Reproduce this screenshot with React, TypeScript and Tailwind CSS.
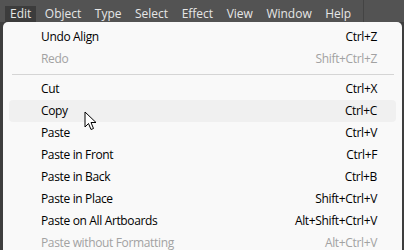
import type { FC } from 'react';

interface Item {
    label: string;
    shortcut?: string;
    disabled?: boolean;
    active?: boolean;
    separator?: boolean;
}

const menus = ['Edit', 'Object', 'Type', 'Select', 'Effect', 'View', 'Window', 'Help'];

const items: Item[] = [
    { label: 'Undo Align', shortcut: 'Ctrl+Z' },
    { label: 'Redo', shortcut: 'Shift+Ctrl+Z', disabled: true },
    { label: '', separator: true },
    { label: 'Cut', shortcut: 'Ctrl+X' },
    { label: 'Copy', shortcut: 'Ctrl+C', active: true },
    { label: 'Paste', shortcut: 'Ctrl+V' },
    { label: 'Paste in Front', shortcut: 'Ctrl+F' },
    { label: 'Paste in Back', shortcut: 'Ctrl+B' },
    { label: 'Paste in Place', shortcut: 'Shift+Ctrl+V' },
    { label: 'Paste on All Artboards', shortcut: 'Alt+Shift+Ctrl+V' },
    { label: 'Paste without Formatting', shortcut: 'Alt+Ctrl+V', disabled: true },
];

const Cursor: FC = () => (
    <svg className="absolute left-[81px] top-[89px]" width="14" height="21" viewBox="0 0 14 21">
        <path
            d="M1 1 L1 16 L4.5 12.5 L7 18.5 L9.5 17.5 L7 11.5 L12 11.5 Z"
            fill="#fff"
            stroke="#000"
            strokeWidth="1"
            strokeLinejoin="round"
        />
    </svg>
);

const App: FC = () => {
    return (
        <div
            className="relative h-[250px] w-[404px] overflow-hidden bg-[#3e3e3e] text-[12px]"
            style={{ fontFamily: '"Open Sans", "Noto Sans", sans-serif' }}
        >
            <div className="flex h-[22px] items-center bg-[#535353] pl-[5px] text-[#e6e6e6]">
                {menus.map((m, i) => (
                    <div
                        key={m}
                        className={`mr-[3.5px] flex h-[16px] items-center self-end px-[5px] leading-none ${
                            i === 0 ? 'bg-[#3c3c3c]' : ''
                        }`}
                    >
                        {m}
                    </div>
                ))}
                <div className="ml-[3px] h-[22px] w-px bg-[#444]" />
            </div>

            <div className="absolute left-[3px] top-[22px] w-[399px] rounded-tl-[5px] rounded-tr-[5px] bg-[#f9f9f9] px-[6px] pt-[4px] tracking-[-0.35px]">
                {items.map((it, i) =>
                    it.separator ? (
                        <div key={i} className="flex h-[8px] items-center pl-[3px] pr-[2px]">
                            <div className="h-px w-full bg-[#d5d5d5]" />
                        </div>
                    ) : (
                        <div
                            key={i}
                            className={`flex h-[22px] items-center justify-between rounded-[4px] pl-[32px] pr-[19px] ${
                                it.active ? 'bg-[#f0f0f0]' : ''
                            } ${it.disabled ? 'text-[#a2a2a2]' : 'text-[#000]'}`}
                        >
                            <span>{it.label}</span>
                            <span>{it.shortcut}</span>
                        </div>
                    ),
                )}
                <Cursor />
            </div>
        </div>
    );
};

export default App;
